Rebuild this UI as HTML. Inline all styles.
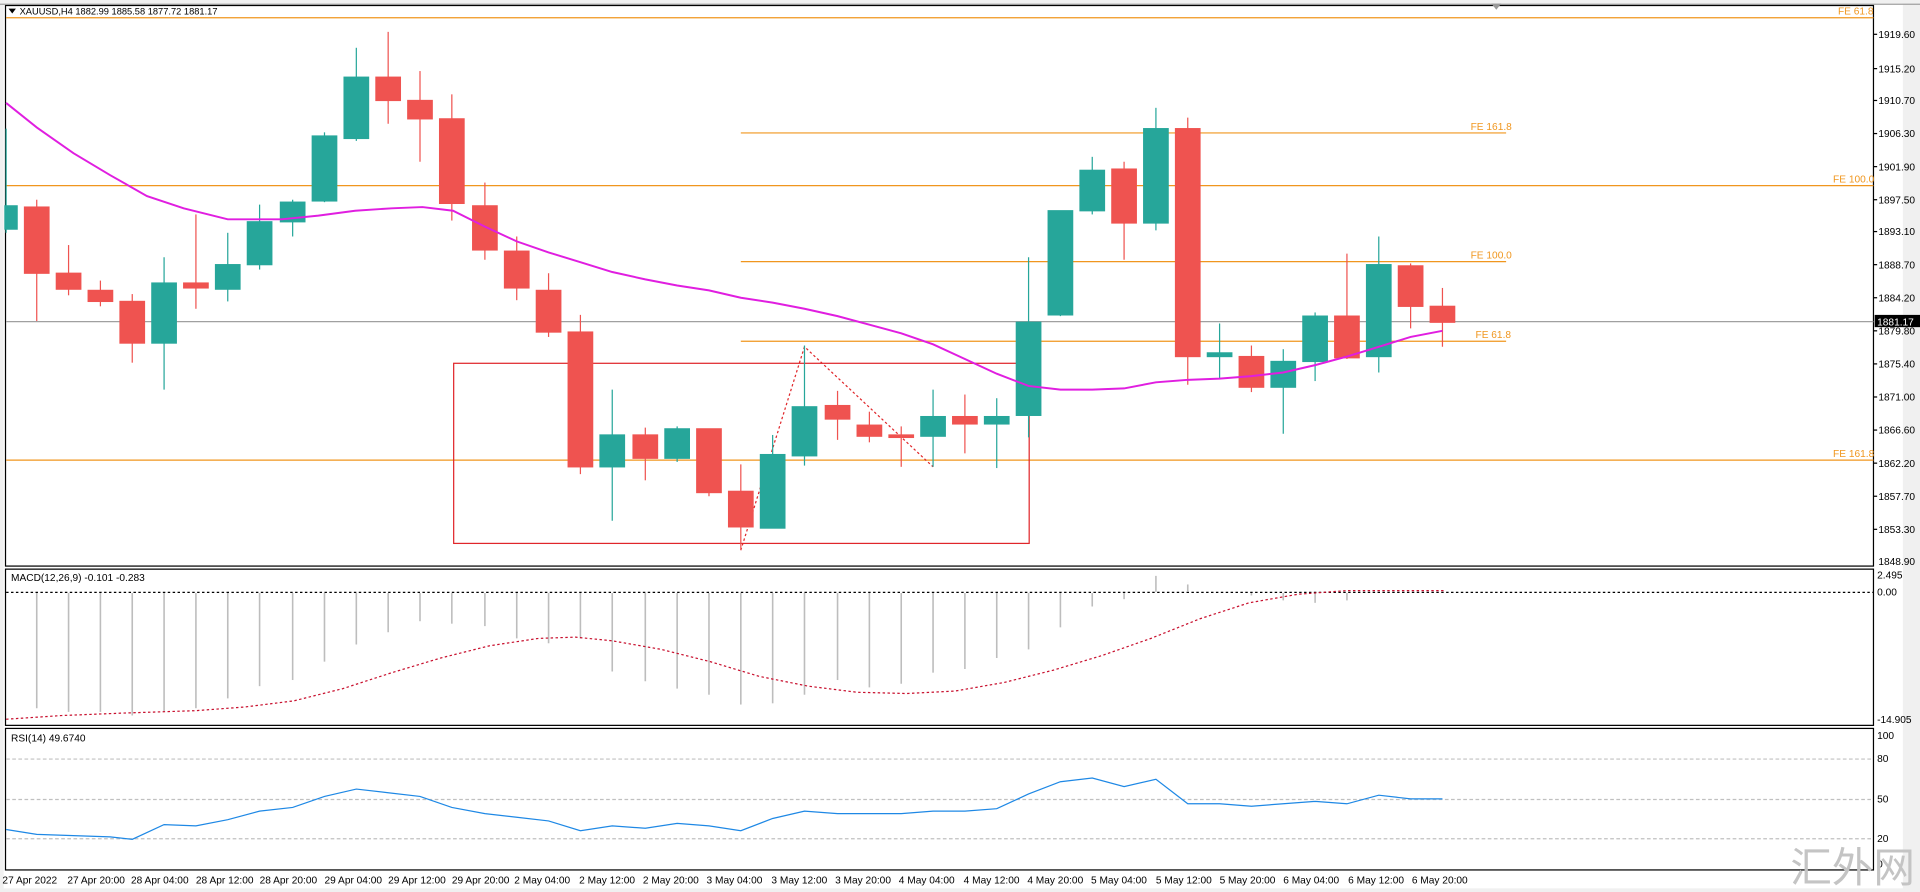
<!DOCTYPE html>
<html><head><meta charset="utf-8"><style>
html,body{margin:0;padding:0;background:#f0f0f0;overflow:hidden}
svg{display:block}
text{font-family:"Liberation Sans","Noto Sans CJK SC",sans-serif;font-size:8.3px;fill:#000}
.fe{fill:#f0961e}
</style></head><body>
<svg width="1920" height="892" viewBox="0 0 1568 728" preserveAspectRatio="none">
<rect x="0" y="0" width="1568" height="728" fill="#f0f0f0"/>
<rect x="3" y="3" width="1551" height="722" fill="#fff"/>
<line x1="0" y1="3.5" x2="1568" y2="3.5" stroke="#a0a0a0"/>
<g fill="none" stroke="#000" stroke-width="1">
<rect x="4.5" y="4.5" width="1525.5" height="457.5"/>
<rect x="4.5" y="464.5" width="1525.5" height="127.5"/>
<rect x="4.5" y="594.5" width="1525.5" height="115.5"/>
</g>
<path d="M7 7 L13 7 L10 11 Z" fill="#000"/>
<text x="16" y="12" style="font-size:7.6px">XAUUSD,H4  1882.99 1885.58 1877.72 1881.17</text>
<path d="M1218 3 L1226 3 L1222 8 Z" fill="#999"/>
<g stroke="#f0961e" stroke-width="1">
<line x1="5" y1="14.5" x2="1530" y2="14.5"/>
<line x1="605" y1="108.5" x2="1230" y2="108.5"/>
<line x1="5" y1="151.5" x2="1530" y2="151.5"/>
<line x1="605" y1="213.5" x2="1230" y2="213.5"/>
<line x1="605" y1="278.5" x2="1230" y2="278.5"/>
<line x1="5" y1="375.5" x2="1530" y2="375.5"/>
</g>
<text class="fe" x="1501" y="12">FE 61.8</text>
<text class="fe" x="1201" y="106">FE 161.8</text>
<text class="fe" x="1497" y="149">FE 100.0</text>
<text class="fe" x="1201" y="211">FE 100.0</text>
<text class="fe" x="1205" y="276">FE 61.8</text>
<text class="fe" x="1497" y="373">FE 161.8</text>
<line x1="5" y1="262.5" x2="1530" y2="262.5" stroke="#a0a0a0"/>
<rect x="370.5" y="296.5" width="470" height="147" fill="none" stroke="#e0262a"/>
<polyline points="605,449 657,283 762,381" fill="none" stroke="#e0262a" stroke-dasharray="2,2"/>
<g stroke-width="1">
<g stroke="#26a69a" fill="#26a69a">
<line x1="5" y1="105" x2="5" y2="190"/><rect x="4" y="168" width="10" height="19"/>
<line x1="134" y1="210" x2="134" y2="318"/><rect x="124" y="231" width="20" height="49"/>
<line x1="186" y1="190" x2="186" y2="246"/><rect x="176" y="216" width="20" height="20"/>
<line x1="212" y1="167" x2="212" y2="220"/><rect x="202" y="181" width="20" height="35"/>
<line x1="239" y1="163" x2="239" y2="193"/><rect x="229" y="165" width="20" height="16"/>
<line x1="265" y1="108" x2="265" y2="165"/><rect x="255" y="111" width="20" height="53"/>
<line x1="291" y1="39" x2="291" y2="115"/><rect x="281" y="63" width="20" height="50"/>
<line x1="500" y1="318" x2="500" y2="425"/><rect x="490" y="355" width="20" height="26"/>
<line x1="553" y1="348" x2="553" y2="377"/><rect x="543" y="350" width="20" height="24"/>
<line x1="631" y1="355" x2="631" y2="431"/><rect x="621" y="371" width="20" height="60"/>
<line x1="657" y1="282" x2="657" y2="380"/><rect x="647" y="332" width="20" height="40"/>
<line x1="762" y1="318" x2="762" y2="381"/><rect x="752" y="340" width="20" height="16"/>
<line x1="814" y1="325" x2="814" y2="382"/><rect x="804" y="340" width="20" height="6"/>
<line x1="840" y1="210" x2="840" y2="357"/><rect x="830" y="263" width="20" height="76"/>
<line x1="866" y1="172" x2="866" y2="258"/><rect x="856" y="172" width="20" height="85"/>
<line x1="892" y1="128" x2="892" y2="175"/><rect x="882" y="139" width="20" height="33"/>
<line x1="944" y1="88" x2="944" y2="188"/><rect x="934" y="105" width="20" height="77"/>
<line x1="996" y1="264" x2="996" y2="309"/><rect x="986" y="288" width="20" height="3"/>
<line x1="1048" y1="285" x2="1048" y2="354"/><rect x="1038" y="295" width="20" height="21"/>
<line x1="1074" y1="255" x2="1074" y2="311"/><rect x="1064" y="258" width="20" height="37"/>
<line x1="1126" y1="193" x2="1126" y2="304"/><rect x="1116" y="216" width="20" height="75"/>
</g>
<g stroke="#ef5350" fill="#ef5350">
<line x1="30" y1="163" x2="30" y2="262"/><rect x="20" y="169" width="20" height="54"/>
<line x1="56" y1="200" x2="56" y2="241"/><rect x="46" y="223" width="20" height="13"/>
<line x1="82" y1="229" x2="82" y2="250"/><rect x="72" y="237" width="20" height="9"/>
<line x1="108" y1="240" x2="108" y2="296"/><rect x="98" y="246" width="20" height="34"/>
<line x1="160" y1="175" x2="160" y2="252"/><rect x="150" y="231" width="20" height="4"/>
<line x1="317" y1="26" x2="317" y2="101"/><rect x="307" y="63" width="20" height="19"/>
<line x1="343" y1="58" x2="343" y2="132"/><rect x="333" y="82" width="20" height="15"/>
<line x1="369" y1="77" x2="369" y2="180"/><rect x="359" y="97" width="20" height="69"/>
<line x1="396" y1="149" x2="396" y2="212"/><rect x="386" y="168" width="20" height="36"/>
<line x1="422" y1="193" x2="422" y2="245"/><rect x="412" y="205" width="20" height="30"/>
<line x1="448" y1="223" x2="448" y2="275"/><rect x="438" y="237" width="20" height="34"/>
<line x1="474" y1="257" x2="474" y2="387"/><rect x="464" y="271" width="20" height="110"/>
<line x1="527" y1="349" x2="527" y2="392"/><rect x="517" y="355" width="20" height="19"/>
<line x1="579" y1="350" x2="579" y2="405"/><rect x="569" y="350" width="20" height="52"/>
<line x1="605" y1="379" x2="605" y2="449"/><rect x="595" y="401" width="20" height="29"/>
<line x1="684" y1="319" x2="684" y2="359"/><rect x="674" y="331" width="20" height="11"/>
<line x1="710" y1="336" x2="710" y2="361"/><rect x="700" y="347" width="20" height="9"/>
<line x1="736" y1="348" x2="736" y2="381"/><rect x="726" y="355" width="20" height="2"/>
<line x1="788" y1="322" x2="788" y2="370"/><rect x="778" y="340" width="20" height="6"/>
<line x1="918" y1="132" x2="918" y2="212"/><rect x="908" y="138" width="20" height="44"/>
<line x1="970" y1="96" x2="970" y2="314"/><rect x="960" y="105" width="20" height="186"/>
<line x1="1022" y1="282" x2="1022" y2="320"/><rect x="1012" y="291" width="20" height="25"/>
<line x1="1100" y1="207" x2="1100" y2="293"/><rect x="1090" y="258" width="20" height="34"/>
<line x1="1152" y1="215" x2="1152" y2="268"/><rect x="1142" y="217" width="20" height="33"/>
<line x1="1178" y1="235" x2="1178" y2="283"/><rect x="1168" y="250" width="20" height="13"/>
</g>
</g>
<polyline fill="none" stroke="#e01ee0" stroke-width="1.6" points="5,84 30,104 60,125 90,143 120,160 150,170 186,179 230,179 260,176 290,172 320,170 345,169 370,172 396,185 422,197 448,206 474,214 500,222 527,228 553,233 579,237 605,243 631,247 657,252 684,258 710,265 736,272 762,281 788,293 814,305 840,315 866,318 892,318 918,317 944,312 970,310 996,309 1022,307 1048,304 1074,298 1100,291 1126,283 1152,275 1178,270"/>
<g>
<text x="1534" y="31">1919.60</text><text x="1534" y="59">1915.20</text><text x="1534" y="85">1910.70</text><text x="1534" y="112">1906.30</text><text x="1534" y="139">1901.90</text><text x="1534" y="166">1897.50</text><text x="1534" y="192">1893.10</text><text x="1534" y="219">1888.70</text><text x="1534" y="246">1884.20</text><text x="1534" y="273">1879.80</text><text x="1534" y="300">1875.40</text><text x="1534" y="327">1871.00</text><text x="1534" y="354">1866.60</text><text x="1534" y="381">1862.20</text><text x="1534" y="408">1857.70</text><text x="1534" y="435">1853.30</text><text x="1534" y="461">1848.90</text>
</g>
<g stroke="#000"><line x1="1530" y1="28" x2="1533" y2="28"/><line x1="1530" y1="56" x2="1533" y2="56"/><line x1="1530" y1="82" x2="1533" y2="82"/><line x1="1530" y1="109" x2="1533" y2="109"/><line x1="1530" y1="136" x2="1533" y2="136"/><line x1="1530" y1="163" x2="1533" y2="163"/><line x1="1530" y1="189" x2="1533" y2="189"/><line x1="1530" y1="216" x2="1533" y2="216"/><line x1="1530" y1="243" x2="1533" y2="243"/><line x1="1530" y1="270" x2="1533" y2="270"/><line x1="1530" y1="297" x2="1533" y2="297"/><line x1="1530" y1="324" x2="1533" y2="324"/><line x1="1530" y1="351" x2="1533" y2="351"/><line x1="1530" y1="378" x2="1533" y2="378"/><line x1="1530" y1="405" x2="1533" y2="405"/><line x1="1530" y1="432" x2="1533" y2="432"/></g>
<rect x="1531" y="257" width="37" height="10" fill="#000"/>
<text x="1533" y="265.5" style="fill:#fff">1881.17</text>
<text x="9" y="474">MACD(12,26,9) -0.101 -0.283</text>
<line x1="5" y1="483.5" x2="1530" y2="483.5" stroke="#000" stroke-dasharray="2,2"/>
<g stroke="#bdbdbd" stroke-width="1.3">
<line x1="30" y1="484" x2="30" y2="578"/><line x1="56" y1="484" x2="56" y2="581"/><line x1="82" y1="484" x2="82" y2="581"/><line x1="108" y1="484" x2="108" y2="584"/><line x1="134" y1="484" x2="134" y2="581"/><line x1="160" y1="484" x2="160" y2="578"/><line x1="186" y1="484" x2="186" y2="570"/><line x1="212" y1="484" x2="212" y2="560"/><line x1="239" y1="484" x2="239" y2="555"/><line x1="265" y1="484" x2="265" y2="540"/><line x1="291" y1="484" x2="291" y2="526"/><line x1="317" y1="484" x2="317" y2="516"/><line x1="343" y1="484" x2="343" y2="507"/><line x1="369" y1="484" x2="369" y2="509"/><line x1="396" y1="484" x2="396" y2="511"/><line x1="422" y1="484" x2="422" y2="521"/><line x1="448" y1="484" x2="448" y2="525"/><line x1="474" y1="484" x2="474" y2="521"/><line x1="500" y1="484" x2="500" y2="548"/><line x1="527" y1="484" x2="527" y2="556"/><line x1="553" y1="484" x2="553" y2="562"/><line x1="579" y1="484" x2="579" y2="567"/><line x1="605" y1="484" x2="605" y2="575"/><line x1="631" y1="484" x2="631" y2="574"/><line x1="657" y1="484" x2="657" y2="567"/><line x1="684" y1="484" x2="684" y2="555"/><line x1="710" y1="484" x2="710" y2="561"/><line x1="736" y1="484" x2="736" y2="558"/><line x1="762" y1="484" x2="762" y2="549"/><line x1="788" y1="484" x2="788" y2="546"/><line x1="814" y1="484" x2="814" y2="537"/><line x1="840" y1="484" x2="840" y2="530"/><line x1="866" y1="484" x2="866" y2="512"/><line x1="892" y1="484" x2="892" y2="495"/><line x1="918" y1="484" x2="918" y2="489"/><line x1="944" y1="483" x2="944" y2="470"/><line x1="970" y1="483" x2="970" y2="477"/><line x1="1022" y1="484" x2="1022" y2="486"/><line x1="1048" y1="484" x2="1048" y2="490"/><line x1="1074" y1="484" x2="1074" y2="492"/><line x1="1100" y1="484" x2="1100" y2="490"/>
</g>
<polyline fill="none" stroke="#c8102e" stroke-dasharray="2,2" points="5,587 50,584 100,582 160,580 200,577 240,572 280,562 320,549 360,537 400,527 440,521 470,520 500,523 540,530 580,540 620,552 660,560 700,565 740,566 780,564 820,557 860,547 900,535 940,521 980,505 1020,492 1060,485 1100,482 1180,482"/>
<text x="1533" y="472">2.495</text><text x="1533" y="486">0.00</text><text x="1533" y="590">-14.905</text>
<text x="9" y="605">RSI(14) 49.6740</text>
<g stroke="#c0c0c0" stroke-dasharray="3,2"><line x1="5" y1="619.5" x2="1530" y2="619.5"/><line x1="5" y1="652.5" x2="1530" y2="652.5"/><line x1="5" y1="684.5" x2="1530" y2="684.5"/></g>
<polyline fill="none" stroke="#1e88e5" stroke-width="1" points="5,677 30,681 60,682 90,683 108,685 134,673 160,674 186,669 212,662 239,659 265,650 291,644 317,647 343,650 369,659 396,664 422,667 448,670 474,678 500,674 527,676 553,672 579,674 605,678 631,668 657,662 684,664 710,664 736,664 762,662 788,662 814,660 840,648 866,638 892,635 918,642 944,636 970,656 996,656 1022,658 1048,656 1074,654 1100,656 1126,649 1152,652 1178,652"/>
<text x="1533" y="603">100</text><text x="1533" y="622">80</text><text x="1533" y="655">50</text><text x="1533" y="687">20</text><text x="1533" y="708">0</text>
<g>
<text x="2" y="721">27 Apr 2022</text><text x="55" y="721">27 Apr 20:00</text><text x="107" y="721">28 Apr 04:00</text><text x="160" y="721">28 Apr 12:00</text><text x="212" y="721">28 Apr 20:00</text><text x="265" y="721">29 Apr 04:00</text><text x="317" y="721">29 Apr 12:00</text><text x="369" y="721">29 Apr 20:00</text><text x="420" y="721">2 May 04:00</text><text x="473" y="721">2 May 12:00</text><text x="525" y="721">2 May 20:00</text><text x="577" y="721">3 May 04:00</text><text x="630" y="721">3 May 12:00</text><text x="682" y="721">3 May 20:00</text><text x="734" y="721">4 May 04:00</text><text x="787" y="721">4 May 12:00</text><text x="839" y="721">4 May 20:00</text><text x="891" y="721">5 May 04:00</text><text x="944" y="721">5 May 12:00</text><text x="996" y="721">5 May 20:00</text><text x="1048" y="721">6 May 04:00</text><text x="1101" y="721">6 May 12:00</text><text x="1153" y="721">6 May 20:00</text>
</g>
<text x="1462" y="720" style="font-size:34px;fill:#c4c4c4">汇外网</text>
</svg>
</body></html>
